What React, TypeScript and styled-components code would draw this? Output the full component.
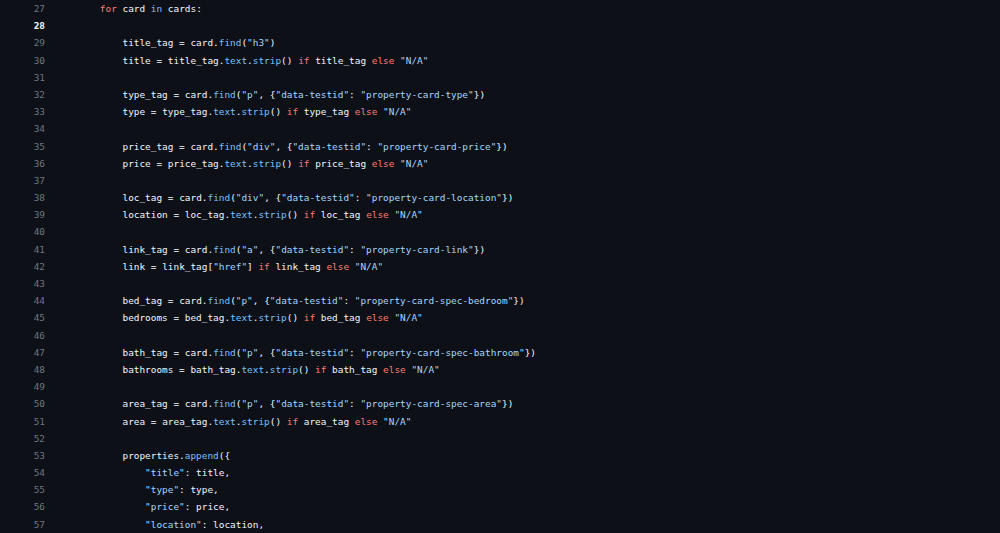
import React from "react";
import styled, { createGlobalStyle } from "styled-components";

const Global = createGlobalStyle`
  html, body { margin: 0; padding: 0; background: #0d1117; }
  body { width: 1000px; height: 533px; overflow: hidden; }
`;

const Viewer = styled.div`
  background: #0d1117;
  width: 1000px;
  height: 533px;
  overflow: hidden;
  font-family: "DejaVu Sans Mono", "Liberation Mono", monospace;
  font-size: 9.42px;
`;

const Row = styled.div`
  display: flex;
  height: 17.2px;
  line-height: 17.2px;
  white-space: pre;
`;

const LineNo = styled.span<{ $active?: boolean }>`
  width: 45px;
  flex: none;
  text-align: right;
  color: ${(p) => (p.$active ? "#f0f6fc" : "#6e7681")};
  font-weight: ${(p) => (p.$active ? 700 : 400)};
`;

const Code = styled.span`
  padding-left: 9.5px;
  color: #f0f6fc;
`;

const Tok = styled.span<{ $kind: string }>`
  color: ${(p) =>
    p.$kind === "str"
      ? "#a5d6ff"
      : p.$kind === "kw"
      ? "#ff7b72"
      : p.$kind === "attr"
      ? "#79c0ff"
      : "#f0f6fc"};
`;

const lines: string[] = [
  '        for card in cards:',
  '',
  '            title_tag = card.find("h3")',
  '            title = title_tag.text.strip() if title_tag else "N/A"',
  '',
  '            type_tag = card.find("p", {"data-testid": "property-card-type"})',
  '            type = type_tag.text.strip() if type_tag else "N/A"',
  '',
  '            price_tag = card.find("div", {"data-testid": "property-card-price"})',
  '            price = price_tag.text.strip() if price_tag else "N/A"',
  '',
  '            loc_tag = card.find("div", {"data-testid": "property-card-location"})',
  '            location = loc_tag.text.strip() if loc_tag else "N/A"',
  '',
  '            link_tag = card.find("a", {"data-testid": "property-card-link"})',
  '            link = link_tag["href"] if link_tag else "N/A"',
  '',
  '            bed_tag = card.find("p", {"data-testid": "property-card-spec-bedroom"})',
  '            bedrooms = bed_tag.text.strip() if bed_tag else "N/A"',
  '',
  '            bath_tag = card.find("p", {"data-testid": "property-card-spec-bathroom"})',
  '            bathrooms = bath_tag.text.strip() if bath_tag else "N/A"',
  '',
  '            area_tag = card.find("p", {"data-testid": "property-card-spec-area"})',
  '            area = area_tag.text.strip() if area_tag else "N/A"',
  '',
  '            properties.append({',
  '                "title": title,',
  '                "type": type,',
  '                "price": price,',
  '                "location": location,',
];

function tokenize(line: string) {
  const out: { kind: string; text: string }[] = [];
  const re = /("[^"]*")|\b(for|if|else)\b|\b(in)\b|(\.)(\w+)|(\w+|\s+|.)/g;
  let m: RegExpExecArray | null;
  while ((m = re.exec(line))) {
    if (m[1]) out.push({ kind: "str", text: m[1] });
    else if (m[2]) out.push({ kind: "kw", text: m[2] });
    else if (m[3]) out.push({ kind: "attr", text: m[3] });
    else if (m[4]) {
      out.push({ kind: "plain", text: m[4] });
      out.push({ kind: "attr", text: m[5] });
    } else out.push({ kind: "plain", text: m[6] });
  }
  return out;
}

export default function App() {
  return (
    <>
      <Global />
      <Viewer>
        {lines.map((l, i) => {
          const n = 27 + i;
          return (
            <Row key={n}>
              <LineNo $active={n === 28}>{n}</LineNo>
              <Code>
                {tokenize(l).map((t, j) => (
                  <Tok key={j} $kind={t.kind}>
                    {t.text}
                  </Tok>
                ))}
              </Code>
            </Row>
          );
        })}
      </Viewer>
    </>
  );
}
